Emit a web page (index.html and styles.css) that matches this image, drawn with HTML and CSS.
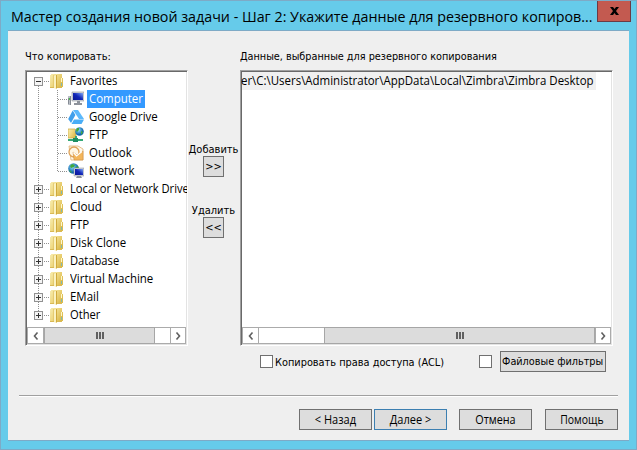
FILE: index.html
```
<!DOCTYPE html>
<html lang="ru">
<head>
<meta charset="utf-8">
<title>Мастер создания новой задачи</title>
<link rel="stylesheet" href="styles.css">
</head>
<body>
<svg width="0" height="0" class="defs" aria-hidden="true">
  <defs>
    <linearGradient id="gold" x1="0" x2="1" y2=".6"><stop offset="0" stop-color="#f8edb0"/><stop offset=".5" stop-color="#efd983"/><stop offset="1" stop-color="#dcbb4e"/></linearGradient>
    <linearGradient id="screen" x1="0" y1="1" x2="1" y2="0"><stop offset="0" stop-color="#0a1690"/><stop offset=".5" stop-color="#1226b8"/><stop offset="1" stop-color="#7fa9f5"/></linearGradient>
    <radialGradient id="earth" cx=".4" cy=".35"><stop offset="0" stop-color="#8fe0ff"/><stop offset="1" stop-color="#1268ae"/></radialGradient>
    <symbol id="folder" viewBox="0 0 16 16">
      <path d="M2 2h1V1h11v4h1v9H2z" fill="url(#gold)"/>
      <path d="M2 14h12v1H2z" fill="#d9b955"/>
      <path d="M6 3l3-1.500V15l-1 1-2-1z" fill="#fbf2c0"/>
      <path d="M8.500 2v13.500" stroke="#cfa93c"/>
      <path d="M5.500 2v12" stroke="#e0c468" stroke-width=".7"/>
      <path d="M13.500 5v4" stroke="#fff7cc"/><path d="M13.500 10v3" stroke="#7fb9b5"/>
    </symbol>
    <symbol id="computer" viewBox="0 0 16 16">
      <path d="M4 1h12v9H4z" fill="#d8dbe0" stroke="#8c929c" stroke-width=".6"/>
      <path d="M5 2h10v7H5z" fill="url(#screen)"/>
      <path d="M9 10h3v2h2v2H6v-2h3z" fill="#8d929b"/>
      <path d="M0 5h3v9H0z" fill="#b9bec5"/><path d="M.5 7v6M2.500 5v9" stroke="#6f767e" stroke-width=".7"/><path d="M1 7h1v2H1z" fill="#46b946"/>
    </symbol>
    <symbol id="drive" viewBox="0 0 16 16">
      <path d="M5 1h5l6 9h-5z" fill="#5cb9fc"/><path d="M4.700 1.600L7.400 6 3 14 .2 10z" fill="#3f9feb"/><path d="M6 10.500h10L13.500 15H3.500z" fill="#49adf6"/>
    </symbol>
    <symbol id="ftp" viewBox="0 0 16 16">
      <path d="M0 2h7l1 1v8H0z" fill="url(#gold)" stroke="#cba83e" stroke-width=".7"/>
      <circle cx="11.500" cy="4.500" r="4.300" fill="url(#earth)"/><path d="M9 1l2 0 0 2-2 2-1-1zM13 4l2 1-2 3z" fill="#43a83e"/>
      <path d="M7 9h2v3h6v2H0v-2h7z" fill="#35a977"/><path d="M5 11h5v4H5z" fill="#1e8e62"/>
    </symbol>
    <symbol id="outlook" viewBox="0 0 16 16">
      <path d="M1 1h9l5 3v11H3z" fill="#fff8ea" stroke="#e0b070" stroke-width=".8"/>
      <circle cx="6" cy="7" r="5" fill="#fff6e4" stroke="#dfa257" stroke-width="1.300"/>
      <path d="M5 7l4 3 6-4v9H6z" fill="#f3b65c" stroke="#c98640" stroke-width=".5"/><path d="M5.500 7.500L8.500 11 14 6.500" fill="none" stroke="#fff" stroke-width="1.200"/>
    </symbol>
    <symbol id="network" viewBox="0 0 16 16">
      <circle cx="5.500" cy="5.500" r="5.300" fill="url(#earth)"/><path d="M2 3l2-2 3 1-1 2-3 1zM7 5l3-2 1 3-3 2zM1 7l2 1 1 2-2-1z" fill="#44a83a"/>
      <path d="M6 5h10v8H6z" fill="#d3d6dc" stroke="#888e98" stroke-width=".5"/><path d="M7 6h8v6H7z" fill="url(#screen)"/><path d="M9 13h4l1 2H8z" fill="#8b919a"/>
    </symbol>
  </defs>
</svg>
<main class="window">
  <header class="titlebar">
    <h1 class="title"><span class="t">Мастер создания новой задачи - Шаг 2: Укажите данные для резервного копиров...</span></h1>
    <button class="close" aria-label="Закрыть"><svg width="9" height="8" viewBox="0 0 9 8"><path d="M0 0h3l1.500 2L6 0h3L6 4l3 4H6L4.500 6 3 8H0l3-4z" fill="#000"/></svg></button>
  </header>
  <section class="client">
    <div class="panes">
      <div class="source">
        <div class="label">Что копировать:</div>
        <div class="box">
          <ul class="tree">
            <li class="row open"><i class="exp"></i><i class="dots"></i><svg class="ico"><use href="#folder"/></svg><span class="name"><span class="t tight">Favorites</span></span></li>
            <li class="row child"><i class="dots"></i><svg class="ico"><use href="#computer"/></svg><span class="name selected"><span class="t">Computer</span></span></li>
            <li class="row child"><i class="dots"></i><svg class="ico"><use href="#drive"/></svg><span class="name"><span class="t">Google Drive</span></span></li>
            <li class="row child"><i class="dots"></i><svg class="ico"><use href="#ftp"/></svg><span class="name"><span class="t">FTP</span></span></li>
            <li class="row child"><i class="dots"></i><svg class="ico"><use href="#outlook"/></svg><span class="name"><span class="t">Outlook</span></span></li>
            <li class="row child last"><i class="dots"></i><svg class="ico"><use href="#network"/></svg><span class="name"><span class="t">Network</span></span></li>
            <li class="row"><i class="exp plus"></i><i class="dots"></i><svg class="ico"><use href="#folder"/></svg><span class="name"><span class="t tight">Local or Network Drive</span></span></li>
            <li class="row"><i class="exp plus"></i><i class="dots"></i><svg class="ico"><use href="#folder"/></svg><span class="name"><span class="t wide">Cloud</span></span></li>
            <li class="row"><i class="exp plus"></i><i class="dots"></i><svg class="ico"><use href="#folder"/></svg><span class="name"><span class="t">FTP</span></span></li>
            <li class="row"><i class="exp plus"></i><i class="dots"></i><svg class="ico"><use href="#folder"/></svg><span class="name"><span class="t">Disk Clone</span></span></li>
            <li class="row"><i class="exp plus"></i><i class="dots"></i><svg class="ico"><use href="#folder"/></svg><span class="name"><span class="t tight">Database</span></span></li>
            <li class="row"><i class="exp plus"></i><i class="dots"></i><svg class="ico"><use href="#folder"/></svg><span class="name"><span class="t">Virtual Machine</span></span></li>
            <li class="row"><i class="exp plus"></i><i class="dots"></i><svg class="ico"><use href="#folder"/></svg><span class="name"><span class="t">EMail</span></span></li>
            <li class="row final"><i class="exp plus"></i><i class="dots"></i><svg class="ico"><use href="#folder"/></svg><span class="name"><span class="t tight">Other</span></span></li>
          </ul>
          <div class="scroll"><span class="arrow"><svg width="6" height="8"><path d="M4.500 .5L1.500 4l3 3.500"/></svg></span><span class="thumb"><i class="grip"></i></span><span class="track"></span><span class="arrow right"><svg width="6" height="8"><path d="M1.500 .5L4.500 4l-3 3.500"/></svg></span></div>
        </div>
      </div>
      <div class="transfer">
        <span class="caption">Добавить</span><button class="move">&gt;&gt;</button>
        <span class="caption second">Удалить</span><button class="move">&lt;&lt;</button>
      </div>
      <div class="target">
        <div class="label"><span class="t wide">Данные, выбранные для резервного копирования</span></div>
        <div class="box">
          <div class="path"><span class="t">er\C:\Users\Administrator\AppData\Local\Zimbra\Zimbra Desktop</span></div>
          <div class="space"></div>
          <div class="scroll"><span class="arrow"><svg width="6" height="8"><path d="M4.500 .5L1.500 4l3 3.500"/></svg></span><span class="track"></span><span class="thumb"><i class="grip"></i></span><span class="arrow right"><svg width="6" height="8"><path d="M1.500 .5L4.500 4l-3 3.500"/></svg></span></div>
        </div>
      </div>
    </div>
    <div class="options"><i class="check"></i><span class="acl"><span class="t wide">Копировать права доступа (ACL)</span></span><i class="check"></i><button class="filters"><span class="t wide">Файловые фильтры</span></button></div>
    <hr class="rule">
    <footer class="actions"><button><span class="t">&lt; Назад</span></button><button class="primary"><span class="t">Далее &gt;</span></button><button class="cancel"><span class="t">Отмена</span></button><button class="help"><span class="t">Помощь</span></button></footer>
  </section>
</main>
</body>
</html>
```
FILE: styles.css
```
* { box-sizing: border-box; }
body { margin: 0; font: 12px/18px "Open Sans", sans-serif; color: #000; }
.defs { display: block; height: 0; }
h1, ul, hr { margin: 0; padding: 0; }
ul { list-style: none; }
i { display: block; flex: none; }
svg { display: block; flex: none; }
button { flex: none; margin: 0; padding: 0; font: inherit; color: inherit; border: 1px solid #707070; background: #ddd; display: flex; align-items: center; justify-content: center; white-space: nowrap; }

/* Condensed text */
.t { display: inline-block; white-space: nowrap; transform: scaleX(.955); transform-origin: 0 50%; }
.tight { transform: scaleX(.932); }
.wide { transform: scaleX(.98); }

.window { width: 637px; height: 450px; padding: 0 7px 7px; border: 1px solid #7eaac6; background: #66cbea; }
.titlebar { display: flex; height: 30px; padding-left: 3px; border-bottom: 1px solid #7eaac6; }
.title { flex: none; width: 586px; height: 29px; font-size: 15px; line-height: 30px; font-weight: 400; }
.title .t { transform: scaleX(.952); }
.close { width: 34px; height: 21px; margin-right: -2px; border: 1px solid #6c3a45; border-top: 0; background: #c35a50; }
.client { height: 410px; padding: 17px 15px 0 17px; border-bottom: 1px solid #7eaac6; background: #efefef; font: 11px/16px "DejaVu Sans Condensed", sans-serif; }
.panes { display: flex; height: 298px; }
.source { flex: none; width: 163px; }
.transfer { flex: none; width: 51px; padding-top: 94px; display: flex; flex-direction: column; align-items: center; }
.target { flex: none; width: 373px; margin-left: 1px; }
.label { height: 22px; padding-top: 1px; white-space: nowrap; }
.box { height: 276px; padding: 1px; border: 1px solid; border-color: #a0a0a0 #fff #fff #a0a0a0; box-shadow: inset 1px 1px #696969, inset -1px -1px #e3e3e3; background: #fff; overflow: hidden; display: flex; flex-direction: column; font: 12px/18px "Open Sans", sans-serif; }
.tree, .space { flex: 1; min-height: 0; }

/* Tree rows with dotted guide lines */
.row { --guide: repeating-linear-gradient(#909090 0 1px, transparent 1px 2px); display: flex; align-items: center; height: 18px; padding-left: 7px; background: var(--guide) 11px 0 / 1px 100% no-repeat; }
.open { background-position: 11px 10px; }
.final { background-size: 1px 9px; }
.exp { width: 9px; height: 9px; border: 1px solid #919191; background: linear-gradient(#333, #333) center / 5px 1px no-repeat, #f4f4f4; }
.plus { background: linear-gradient(#333, #333) center / 5px 1px no-repeat, linear-gradient(#333, #333) center / 1px 5px no-repeat, #f4f4f4; }
.dots { width: 6px; height: 1px; margin-right: -1px; background: repeating-linear-gradient(90deg, transparent 0 1px, #909090 1px 2px); }
.ico { width: 16px; height: 16px; margin-right: 4px; }
.name { padding: 0 2px; white-space: nowrap; }
.child { padding-left: 30px; background: var(--guide) 11px 0 / 1px 100% no-repeat, var(--guide) 30px 0 / 1px 100% no-repeat; }
.last { background-size: 1px 100%, 1px 9px; }
.child .dots { width: 11px; margin: 0; }
.child .ico { margin-right: 3px; }
.selected { width: 58px; background: #3399ff; color: #fff; }

.scroll { display: flex; height: 17px; }
.arrow { flex: none; width: 17px; border: 1px solid #ababab; display: grid; place-items: center; }
.right { width: 16px; }
.arrow path { fill: none; stroke: #606060; stroke-width: 1.600; }
.thumb { background: #dcdcdc; border: 1px solid #a6a6a6; display: grid; place-items: center; }
.grip { width: 8px; height: 7px; background: repeating-linear-gradient(90deg, #606060 0 2px, transparent 2px 3px); }
.track { border: solid #ababab; border-width: 1px 0; }
.source .thumb { width: 111px; }
.source .track { flex: 1; }
.target .track { width: 65px; }
.target .thumb { flex: 1; }
.path { width: 354px; height: 18px; background: #f0f0f0; white-space: nowrap; }
.path .t { margin-left: -1px; }

.caption { margin-bottom: -2px; }
.second { margin-top: 26px; }
.move { width: 21px; height: 21px; }
.options { display: flex; align-items: center; height: 21px; margin-top: 5px; padding-left: 235px; }
.check { width: 13px; height: 13px; border: 1px solid #707070; background: #fff; }
.acl { flex: none; width: 206px; padding: 2px 0 0 2px; }
.acl .t { transform: scaleX(.988); }
.filters { width: 106px; height: 21px; margin-left: 8px; }
.filters .t { margin-top: 1px; transform-origin: 50% 50%; }
.rule { height: 2px; margin: 23px -4px 0 -6px; border: 0; background: linear-gradient(#a0a0a0 50%, #fff 50%); }
.actions { display: flex; margin: 12px 0 0 274px; font: 12px/18px "Open Sans", sans-serif; }
.actions button { width: 73px; height: 21px; margin-right: 2px; }
.actions .t { transform: scaleX(.92); transform-origin: 50% 50%; }
.actions .primary { border-color: #3c7fb1; }
.actions .cancel { margin-left: 10px; }
.actions .cancel .t { transform: scaleX(.9); }
.actions .help { margin-left: 11px; }
.actions .help .t { transform: scaleX(.87); }
```
